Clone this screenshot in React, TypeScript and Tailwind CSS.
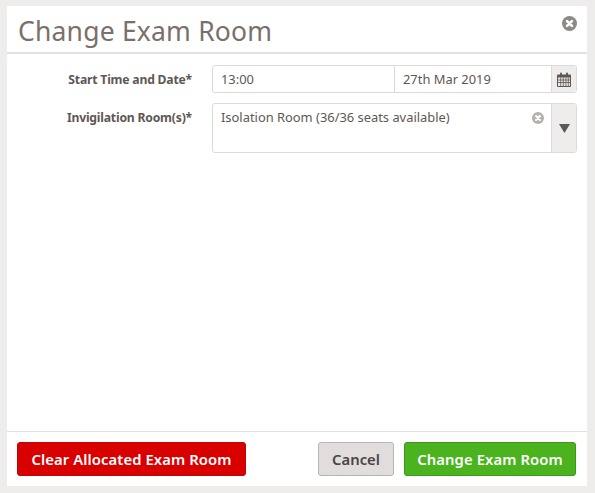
import React from 'react';

function CloseDot({ size, color }: { size: number; color: string }) {
  return (
    <svg width={size} height={size} viewBox="0 0 16 16" className="block">
      <circle cx="8" cy="8" r="8" fill={color} />
      <path d="M5.4 5.4l5.2 5.2M10.6 5.4l-5.2 5.2" stroke="#fff" strokeWidth="2.8" strokeLinecap="round" />
    </svg>
  );
}

function CalendarIcon() {
  return (
    <svg width="14" height="15" viewBox="0 0 14 15" className="block">
      <path d="M1 2.5h12a1 1 0 0 1 1 1V14a1 1 0 0 1-1 1H1a1 1 0 0 1-1-1V3.5a1 1 0 0 1 1-1z" fill="#5f5753" />
      <rect x="3" y="0.5" width="2" height="3.5" rx="1" fill="#5f5753" />
      <rect x="9" y="0.5" width="2" height="3.5" rx="1" fill="#5f5753" />
      <path d="M1 5.5h12v8.5H1z" fill="#e9e7e5" />
      <path d="M1 8h12M1 10.5h12M3.7 5.5V14M6.3 5.5V14M8.9 5.5V14M11.3 5.5V14" stroke="#5f5753" strokeWidth="0.8" />
    </svg>
  );
}

export default function App() {
  return (
    <div className="w-[595px] h-[493px] bg-[#eeedeb] pt-[6px] pl-[7px] font-['Noto_Sans',sans-serif] text-[#5f5753]">
      <div className="w-[580px] h-[480px] bg-white flex flex-col">
        <div className="h-[48px] flex-none border-b-2 border-[#e3e1e1] pl-[11px] pr-[10px] flex justify-between relative">
          <h1 className="text-[26.5px] leading-[50px] text-[#7a706b] tracking-[0.2px]">Change Exam Room</h1>
          <div className="pt-[10px]">
            <CloseDot size={15} color="#8f8885" />
          </div>
        </div>

        <div className="flex-1 pt-[11px] pr-[10px]">
          <div className="flex h-[28px]">
            <label className="w-[185px] text-right text-[12.2px] font-bold tracking-[-0.2px] leading-[30px] text-[#5f5753]">Start Time and Date*</label>
            <div className="ml-[20px] w-[365px] h-[28px] flex border border-[#dddbd9] rounded-[3px] text-[12.9px] text-[#5f5753]">
              <div className="w-[181px] pl-[8px] leading-[27px]">13:00</div>
              <div className="flex-1 border-l border-[#dddbd9] pl-[8px] leading-[27px]">27th Mar 2019</div>
              <div className="w-[25px] border-l border-[#dddbd9] bg-[#eeedeb] rounded-r-[3px] flex items-center justify-center">
                <CalendarIcon />
              </div>
            </div>
          </div>

          <div className="flex mt-[10px]">
            <label className="w-[185px] text-right text-[12.2px] font-bold tracking-[-0.2px] leading-[30px] text-[#5f5753]">Invigilation Room(s)*</label>
            <div className="ml-[20px] w-[365px] h-[50px] flex border border-[#dddbd9] rounded-[3px] text-[12.9px]">
              <div className="flex-1 pl-[8px] pr-[7px] flex justify-between items-start">
                <span className="leading-[27px]">Isolation Room (36/36 seats available)</span>
                <div className="pt-[8px]">
                  <CloseDot size={12} color="#b5b0ad" />
                </div>
              </div>
              <div className="w-[25px] border-l border-[#dddbd9] bg-[#eeedeb] rounded-r-[3px] flex items-center justify-center">
                <svg width="11" height="9" viewBox="0 0 11 9" className="block">
                  <path d="M0 0h11L5.5 9z" fill="#5f5753" />
                </svg>
              </div>
            </div>
          </div>
        </div>

        <div className="h-[55px] flex-none border-t border-[#e3e1e1] pt-[10px] pl-[10px] pr-[11px] flex items-start">
          <button className="h-[34px] w-[229px] bg-[#d90000] border border-[#bd0606] rounded-[3px] text-white text-[14.8px] font-semibold tracking-[0.1px]">Clear Allocated Exam Room</button>
          <button className="ml-auto h-[34px] w-[76px] bg-[#e1dddd] border border-[#b9b5b3] rounded-[3px] text-[#4a4442] text-[14.8px] font-semibold">Cancel</button>
          <button className="ml-[10px] h-[34px] w-[172px] bg-[#4ab31d] border border-[#3d9a16] rounded-[3px] text-white text-[14.8px] font-semibold tracking-[0.1px]">Change Exam Room</button>
        </div>
      </div>
    </div>
  );
}
